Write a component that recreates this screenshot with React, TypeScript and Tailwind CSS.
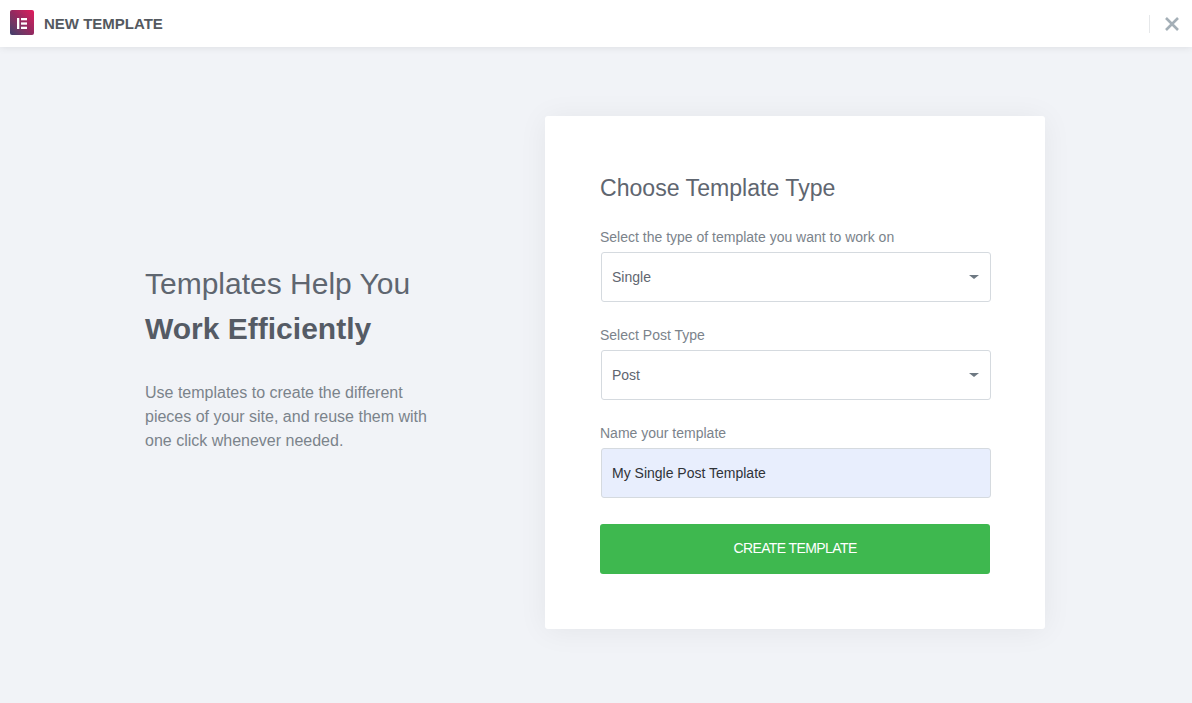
export default function App() {
  return (
    <div className="h-[703px] flex flex-col bg-[#f1f3f7] font-['Liberation_Sans',Arial,sans-serif] overflow-hidden">
      {/* Header */}
      <header className="relative z-10 h-[47px] shrink-0 bg-white shadow-[0_0_8px_rgba(0,0,0,0.1)] flex items-center pl-[10px] pr-[13px]">
        <div className="w-6 h-[25px] mb-[2px] rounded-[2px] bg-gradient-to-tr from-[#3c3d6b] via-[#92285f] to-[#e2175c] flex items-center justify-center">
          <svg width="12" height="13" viewBox="0 0 12 13" fill="#fff">
            <rect x="1" y="2" width="2.3" height="11" />
            <rect x="5" y="2" width="6" height="2.3" />
            <rect x="5" y="6.4" width="6" height="2.3" />
            <rect x="5" y="10.7" width="6" height="2.3" />
          </svg>
        </div>
        <h1 className="ml-[10px] pt-px text-[15px] font-bold text-[#54595f]">NEW TEMPLATE</h1>
        <div className="ml-auto flex items-center">
          <div className="w-px h-[18px] bg-[#e6e8ea] mr-[15px]" />
          <svg width="14" height="14" viewBox="0 0 14 14" stroke="#a4afb7" strokeWidth="2.6" fill="none">
            <path d="M1 1l12 12M13 1L1 13" />
          </svg>
        </div>
      </header>

      {/* Body */}
      <main className="flex-1 flex pl-[145px] pt-[69px]">
        <div className="w-[400px] shrink-0 pt-[145px]">
          <h2 className="text-[30px] leading-[45px] text-[#5f6670]">
            Templates Help You
            <br />
            <strong className="font-bold text-[#555b65]">Work Efficiently</strong>
          </h2>
          <p className="mt-[30px] w-[300px] text-[16px] leading-[24px] text-[#7b838b]">
            Use templates to create the different pieces of your site, and reuse them with one click whenever needed.
          </p>
        </div>

        <form className="w-[500px] h-[513px] bg-white rounded-[3px] shadow-[0_2px_30px_rgba(0,0,0,0.06)] pt-[56px] px-[55px]">
          <h3 className="text-[23.1px] leading-[32px] text-[#5f6670]">Choose Template Type</h3>
          <div className="mt-[25px] text-[14px] leading-[16px] text-[#7b838b]">Select the type of template you want to work on</div>
          <div className="mt-[7px] ml-px w-[390px] h-[50px] bg-white border border-[#d5dadf] rounded-[3px] pl-[10px] pr-3 flex items-center justify-between">
            <span className="text-[14px] text-[#5f6670]">Single</span>
            <span className="w-0 h-0 border-x-[5px] border-x-transparent border-t-[4px] border-t-[#6d7882] mr-[-1px]" />
          </div>
          <div className="mt-[25px] text-[14px] leading-[16px] text-[#7b838b]">Select Post Type</div>
          <div className="mt-[7px] ml-px w-[390px] h-[50px] bg-white border border-[#d5dadf] rounded-[3px] pl-[10px] pr-3 flex items-center justify-between">
            <span className="text-[14px] text-[#5f6670]">Post</span>
            <span className="w-0 h-0 border-x-[5px] border-x-transparent border-t-[4px] border-t-[#6d7882] mr-[-1px]" />
          </div>
          <div className="mt-[25px] text-[14px] leading-[16px] text-[#7b838b]">Name your template</div>
          <div className="mt-[7px] ml-px w-[390px] h-[50px] bg-[#e8eefd] border border-[#d5dadf] rounded-[3px] pl-[10px] flex items-center">
            <span className="text-[14px] text-[#2f3338]">My Single Post Template</span>
          </div>
          <button type="button" className="mt-[26px] w-[390px] h-[50px] pb-[2px] bg-[#3eb84f] rounded-[3px] text-white text-[14px] font-normal tracking-[-0.6px]">
            CREATE TEMPLATE
          </button>
        </form>
      </main>
    </div>
  );
}
